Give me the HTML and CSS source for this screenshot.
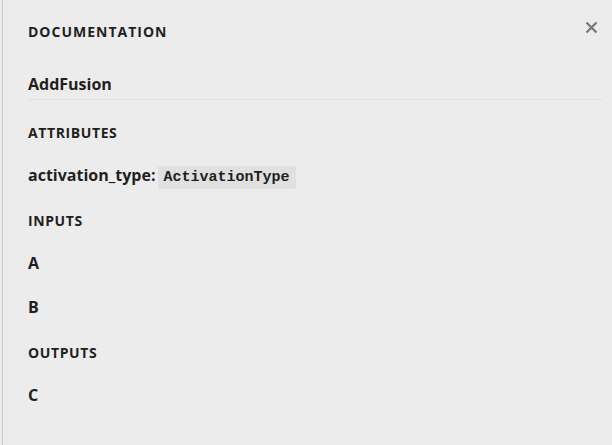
FILE: index.html
```html
<!DOCTYPE html>
<html>
<head>
<meta charset="utf-8">
<link rel="stylesheet" href="styles.css">
</head>
<body>
<div class="sidebar">
  <div class="header">
    <div class="header-title">DOCUMENTATION</div>
    <button class="close" aria-label="Close">
      <svg width="13" height="13" viewBox="0 0 13 13"><path d="M1.5 1.5 L11.5 11.5 M11.5 1.5 L1.5 11.5" stroke="#777" stroke-width="2.2" stroke-linecap="butt"/></svg>
    </button>
  </div>
  <div class="content">
    <h1 class="name">AddFusion</h1>
    <h2 class="section">ATTRIBUTES</h2>
    <div class="item"><span class="item-name">activation_type:</span><code class="code">ActivationType</code></div>
    <h2 class="section">INPUTS</h2>
    <div class="item"><span class="item-name">A</span></div>
    <div class="item"><span class="item-name">B</span></div>
    <h2 class="section">OUTPUTS</h2>
    <div class="item"><span class="item-name">C</span></div>
  </div>
</div>
</body>
</html>
```
FILE: styles.css
```css
html, body {
  margin: 0;
  padding: 0;
  height: 100%;
}
body {
  background: #ececec;
  font-family: "Open Sans", "Noto Sans", sans-serif;
  color: #1f1f1f;
}
.sidebar {
  height: 100%;
  box-sizing: border-box;
  border-left: 1px solid #c8c8c8;
  margin-left: 2px;
  padding: 0 15px 0 25px;
}
.header {
  display: flex;
  justify-content: space-between;
  align-items: flex-start;
  padding-top: 24px;
}
.header-title {
  font-size: 14px;
  font-weight: 700;
  letter-spacing: 1px;
  line-height: 16px;
}
.close {
  border: 0;
  background: none;
  padding: 0;
  margin-top: -3px;
  margin-right: -1px;
  width: 13px;
  height: 13px;
  display: block;
}
.close svg { display: block; }
.name {
  margin: 0 -6px 17px 0;
  padding-top: 33px;
  padding-bottom: 4px;
  font-size: 16px;
  line-height: 22px;
  font-weight: 700;
  border-bottom: 1px solid #e2e2e2;
}
.section {
  margin: 0;
  font-size: 14px;
  line-height: 16px;
  font-weight: 700;
  letter-spacing: 0.6px;
  padding-top: 8px;
  padding-bottom: 20px;
}
.item {
  font-size: 16px;
  line-height: 24px;
  font-weight: 700;
  padding: 2px 0 18px;
}
.item-name { font-weight: 700; }
.code {
  font-family: "Liberation Mono", monospace;
  font-size: 15px;
  line-height: 16px;
  font-weight: 700;
  background: #e0e0e0;
  border-radius: 3px;
  padding: 3px 6px;
  margin-left: 2px;
}
```
